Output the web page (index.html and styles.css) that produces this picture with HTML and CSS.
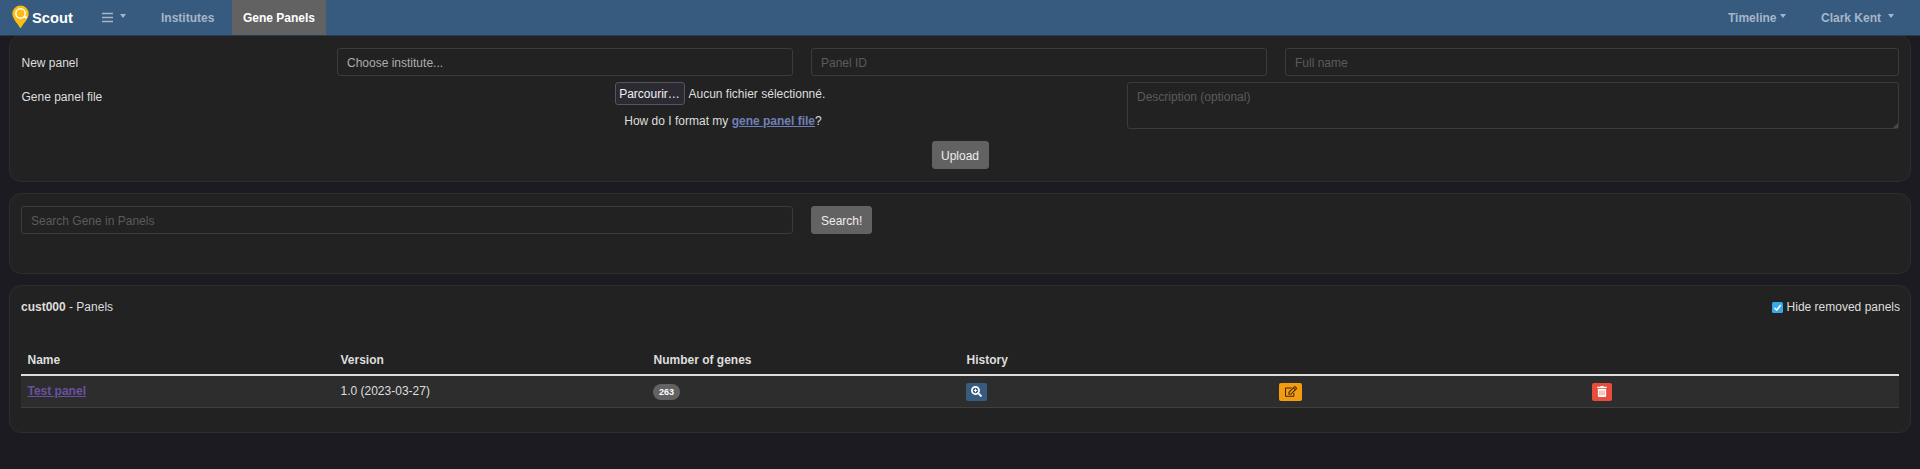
FILE: index.html
```html
<!DOCTYPE html>
<html lang="en">
<head>
<meta charset="utf-8">
<title>Scout - Gene Panels</title>
<link rel="stylesheet" href="styles.css">
</head>
<body>
<nav class="navbar">
  <a class="brand">
    <svg class="logo" viewBox="0 0 17 24" width="17" height="24"><path d="M8.500 .500A8.200 8.200 0 0 0 .300 8.700C.300 13.500 5.300 18 8.500 23.500 11.700 18 16.700 13.500 16.700 8.700A8.200 8.200 0 0 0 8.500 .500z" fill="#fdbc11"/><circle cx="8.500" cy="8.500" r="4.700" fill="none" stroke="#fff" stroke-width="1.500"/><path d="M11.800 11.200l3.200 1.700" stroke="#fff" stroke-width="1.800"/></svg>
    <span>Scout</span>
  </a>
  <a class="nav-link menu"><svg width="11" height="11" viewBox="0 0 11 11"><path d="M0 1.500h11M0 5.500h11M0 9.500h11" stroke="currentColor" stroke-width="1.700"/></svg><i class="caret"></i></a>
  <a class="nav-link institutes">Institutes</a>
  <a class="nav-link active">Gene Panels</a>
  <a class="nav-link timeline">Timeline<i class="caret"></i></a>
  <a class="nav-link user">Clark Kent<i class="caret"></i></a>
</nav>
<main>
  <section class="card upload-card">
    <div class="row">
      <label class="label col-2">New panel</label>
      <div class="control col-3 select">Choose institute...</div>
      <input class="control col-3" placeholder="Panel ID">
      <input class="control col-4" placeholder="Full name">
    </div>
    <div class="row">
      <label class="label col-2">Gene panel file</label>
      <div class="file-col col-5">
        <div class="file"><button class="browse">Parcourir…</button><span>Aucun fichier sélectionné.</span></div>
        <div class="hint">How do I format my <a class="link">gene panel file</a>?</div>
      </div>
      <div class="area-wrap col-5">
        <textarea class="control area" placeholder="Description (optional)"></textarea>
        <svg class="grip" width="5" height="5" viewBox="0 0 5 5"><path d="M5 0v5H0z" fill="#4a4a4a"/></svg>
      </div>
    </div>
    <div class="actions"><button class="btn">Upload</button></div>
  </section>
  <section class="card search-card">
    <div class="row">
      <input class="control col-5" placeholder="Search Gene in Panels">
      <div class="col-2"><button class="btn">Search!</button></div>
    </div>
  </section>
  <section class="card panels-card">
    <header class="panels-head">
      <div><strong>cust000</strong> - Panels</div>
      <label class="check"><svg width="11" height="11" viewBox="0 0 11 11"><rect width="11" height="11" rx="1.500" fill="#36a9e8"/><path d="M2.500 5.800l2.200 2.200 4-5" fill="none" stroke="#fff" stroke-width="1.600"/></svg>Hide removed panels</label>
    </header>
    <table class="table">
      <thead><tr><th>Name</th><th>Version</th><th>Number of genes</th><th>History</th><th></th><th></th></tr></thead>
      <tbody><tr>
        <td><a class="link visited">Test panel</a></td>
        <td>1.0 (2023-03-27)</td>
        <td><span class="badge">263</span></td>
        <td><button class="icon-btn history"><svg width="11" height="11" viewBox="0 0 512 512"><path fill="currentColor" d="M505 442.700L405.300 343c-4.500-4.500-10.600-7-17-7H372c27.600-35.300 44-79.700 44-128C416 93.100 322.900 0 208 0S0 93.100 0 208s93.100 208 208 208c48.300 0 92.700-16.400 128-44v16.300c0 6.400 2.500 12.500 7 17l99.700 99.700c9.400 9.400 24.600 9.400 33.900 0l28.300-28.300c9.400-9.400 9.400-24.600.1-34zM208 336c-70.700 0-128-57.200-128-128 0-70.700 57.200-128 128-128 70.700 0 128 57.200 128 128 0 70.700-57.200 128-128 128z"/><path d="M208 128v160M128 208h160" stroke="currentColor" stroke-width="48"/></svg></button></td>
        <td><button class="icon-btn edit"><svg width="12" height="11" viewBox="0 0 576 512"><path fill="currentColor" d="M402.300 344.900l32-32c5-5 13.700-1.500 13.700 5.700V464c0 26.500-21.500 48-48 48H48c-26.500 0-48-21.500-48-48V112c0-26.500 21.500-48 48-48h273.500c7.100 0 10.700 8.600 5.700 13.700l-32 32c-1.500 1.500-3.500 2.300-5.700 2.300H48v352h352V350.500c0-2.100.8-4.100 2.300-5.600zm156.600-201.800L296.300 405.700l-90.400 10c-26.200 2.900-48.500-19.200-45.600-45.600l10-90.400L432.900 17.100c22.900-22.900 59.900-22.900 82.700 0l43.200 43.200c22.900 22.900 22.900 60 .1 82.800zM460.100 174L402 115.900 216.200 301.800l-7.300 65.300 65.300-7.300L460.100 174zm64.800-79.700l-43.200-43.200c-4.100-4.100-10.800-4.100-14.800 0L436 82l58.100 58.100 30.900-30.900c4-4.200 4-10.800-.1-14.900z"/></svg></button></td>
        <td><button class="icon-btn remove"><svg width="10" height="11" viewBox="0 0 448 512"><path fill="currentColor" d="M432 32H312l-9.400-18.700A24 24 0 0 0 281.100 0H166.800a23.700 23.700 0 0 0-21.400 13.300L136 32H16A16 16 0 0 0 0 48v32a16 16 0 0 0 16 16h416a16 16 0 0 0 16-16V48a16 16 0 0 0-16-16zM32 128h384v336a48 48 0 0 1-48 48H80a48 48 0 0 1-48-48z"/><path d="M128 208v224M224 208v224M320 208v224" stroke="#e74c3c" stroke-width="32"/></svg></button></td>
      </tr></tbody>
    </table>
  </section>
</main>
</body>
</html>
```
FILE: styles.css
```css
* { box-sizing: border-box; }
body {
  margin: 0;
  height: 469px;
  overflow: hidden;
  background: #1c1b22;
  color: #dedede;
  font: 12px/18px "Liberation Sans", Arial, sans-serif;
}
button, input, textarea { font: inherit; margin: 0; }

.navbar {
  display: flex;
  align-items: stretch;
  height: 35px;
  background: #375a7f;
  box-shadow: 0 1px 0 #2a3c50;
  position: relative;
}
.brand {
  display: flex;
  align-items: center;
  width: 92px;
  padding-left: 12px;
  gap: 3px;
  color: #fff;
  font-size: 14.700px;
  font-weight: bold;
}
.logo { margin-top: -2px; }
.nav-link {
  display: flex;
  align-items: center;
  color: #a5b6c8;
  font-weight: bold;
}
.caret {
  border: 4px solid transparent;
  border-width: 4px 3.500px 0;
  border-top-color: currentColor;
  margin: -3px 0 0 4px;
}
.menu { width: 69px; padding-left: 10px; }
.menu .caret { margin-left: 7px; }
.institutes { width: 71px; }
.active { width: 94px; justify-content: center; background: #626262; color: #fff; }
.timeline { margin-left: auto; width: 93px; }
.user { width: 99px; }
.user .caret { margin-left: 7px; }

main { display: flex; flex-direction: column; gap: 11px; padding: 0 9px; }
.card {
  border: 1px solid #2d2d2f;
  border-radius: 12px;
  background: #222;
}
.upload-card { height: 147px; padding: 12px 2px 0; }
.search-card { height: 81px; padding: 12px 2px 0; }
.panels-card { height: 148px; padding: 12px 11px 0; }

.row { display: grid; grid-template-columns: repeat(12, 1fr); }
.row + .row { margin-top: 6px; }
.row > * { margin: 0 9px; min-width: 0; }
.col-2 { grid-column: span 2; }
.col-3 { grid-column: span 3; }
.col-4 { grid-column: span 4; }
.col-5 { grid-column: span 5; }
.label { padding: 6px 0 0 .5px; }
.control {
  height: 28px;
  padding: 5px 9px 3px;
  border: 1px solid #3b3b3b;
  border-radius: 3px;
  background: #222;
  color: #adadad;
  outline: 0;
}
.control::placeholder { color: #5b5b5b; opacity: 1; }
.area-wrap { position: relative; height: 47px; }
.area { display: block; width: 100%; height: 47px; resize: none; }
.grip { position: absolute; right: 1px; bottom: 1px; }
.file-col { display: flex; flex-direction: column; align-items: center; }
.file { display: flex; align-items: center; gap: 4px; width: 217px; white-space: nowrap; }
.browse {
  width: 70px;
  height: 23px;
  padding: 1px 0 0;
  border: 1px solid #56555e;
  border-radius: 3px;
  background: #2b2a33;
  color: #f0f0f2;
}
.file span { padding-top: 1px; }
.hint { margin-top: 6px; padding-top: 1px; }
.link { color: #7080b8; font-weight: bold; text-decoration: underline; }
.visited { color: #6a51a0; }
.actions { display: flex; justify-content: center; margin-top: 11px; }
.btn {
  display: block;
  height: 28px;
  padding: 1px 9px 0;
  border: 1px solid #626262;
  border-radius: 3px;
  background: #626262;
  color: #eee;
}
.actions .btn { width: 57px; padding: 1px 0 0; }

.panels-head { display: flex; justify-content: space-between; }
.check { display: flex; align-items: center; gap: 4px; margin-right: -1px; }
.table { width: 100%; table-layout: fixed; border-collapse: collapse; margin-top: 27px; }
.table th, .table td { text-align: left; padding: 0 6.500px; }
.table th { height: 32px; padding-top: 2px; border-bottom: 2px solid #dedede; }
.table td { height: 32px; border-bottom: 1px solid #404040; background: #2d2d2d; }
.badge {
  display: block;
  width: 27px;
  height: 16px;
  margin: 1px 0 0 -.5px;
  border-radius: 8px;
  background: #626262;
  color: #fff;
  font-size: 9px;
  font-weight: bold;
  line-height: 16px;
  text-align: center;
}
.icon-btn {
  display: flex;
  align-items: center;
  justify-content: center;
  height: 18px;
  margin: 1px 0 0 -.5px;
  padding: 0;
  border: 0;
  border-radius: 2px;
  color: #fff;
}
.history { width: 21px; background: #375a7f; }
.edit { width: 23px; background: #f39c12; color: #3a2608; }
.remove { width: 20px; background: #e74c3c; }
```
